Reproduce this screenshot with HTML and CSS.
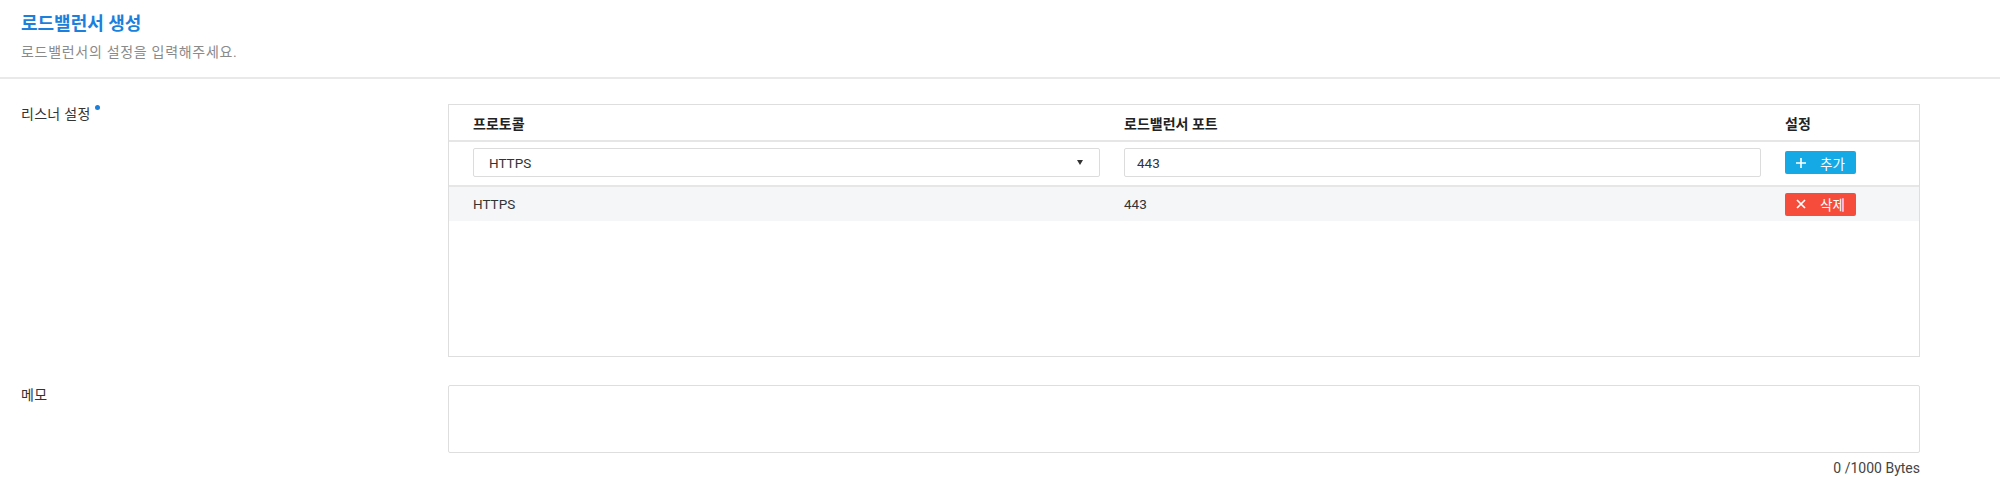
FILE: index.html
```html
<!DOCTYPE html>
<html lang="ko">

<head>
    <meta charset="UTF-8">
    <meta name="viewport" content="width=device-width, initial-scale=1.0">
    <title>로드밸런서 생성</title>
    <link rel="stylesheet" href="styles.css">
</head>

<body>
    <div class="page-head">
        <h1 class="page-title">로드밸런서 생성</h1>
        <p class="page-desc">로드밸런서의 설정을 입력해주세요.</p>
    </div>

    <div class="form">
        <div class="form-row">
            <div class="form-label">리스너 설정<span class="required"></span></div>
            <div class="form-field">
                <div class="listener-box">
                    <div class="lb-row lb-head">
                        <div>프로토콜</div>
                        <div>로드밸런서 포트</div>
                        <div>설정</div>
                    </div>
                    <div class="lb-row lb-input">
                        <div class="select-box">
                            <span>HTTPS</span>
                            <span class="caret"></span>
                        </div>
                        <div class="text-box">443</div>
                        <div>
                            <button class="btn btn-add">
                                <svg width="10" height="10" viewBox="0 0 10 10">
                                    <path d="M5 0V10M0 5H10" stroke="#fff" stroke-width="1.6" />
                                </svg>
                                <span>추가</span>
                            </button>
                        </div>
                    </div>
                    <div class="lb-row lb-item">
                        <div>HTTPS</div>
                        <div>443</div>
                        <div>
                            <button class="btn btn-del">
                                <svg width="10" height="10" viewBox="0 0 10 10">
                                    <path d="M1 1L9 9M9 1L1 9" stroke="#fff" stroke-width="1.7" />
                                </svg>
                                <span>삭제</span>
                            </button>
                        </div>
                    </div>
                </div>
            </div>
        </div>

        <div class="form-row memo-row">
            <div class="form-label">메모</div>
            <div class="form-field">
                <div class="memo-box"></div>
                <div class="memo-count">0 /1000 Bytes</div>
            </div>
        </div>
    </div>
</body>

</html>
```

FILE: styles.css
```css
body {
    margin: 0;
    background: #fff;
    font-family: Roboto, "Noto Sans CJK KR", sans-serif;
    font-size: 14px;
    color: #333;
}

.page-head {
    padding: 12px 21px 15px;
    border-bottom: 2px solid #e9e9e9;
}

.page-title {
    margin: 0;
    font-size: 18px;
    line-height: 24px;
    font-weight: 600;
    color: #1c7fdc;
}

.page-desc {
    margin: 6px 0 0;
    font-size: 14px;
    line-height: 20px;
    letter-spacing: 0.7px;
    color: #8a8a8a;
}

.form {
    padding: 0 80px 0 21px;
}

.form-row {
    display: flex;
    margin-top: 25px;
}

.memo-row {
    margin-top: 28px;
}

.form-label {
    width: 427px;
    flex: none;
    line-height: 20px;
    font-size: 14px;
    letter-spacing: 0.3px;
    color: #333;
}

.required {
    display: inline-block;
    width: 5px;
    height: 5px;
    margin-left: 4px;
    border-radius: 50%;
    background: #1c7fdc;
    vertical-align: 9px;
}

.form-field {
    flex: 1;
}

.listener-box {
    height: 251px;
    border: 1px solid #dedede;
}

.lb-row {
    display: grid;
    grid-template-columns: 627px 637px 1fr;
    column-gap: 24px;
    align-items: center;
    padding: 0 24px;
}

.lb-head {
    height: 35px;
    border-bottom: 2px solid #e6e6e6;
    font-weight: bold;
    font-size: 14px;
    color: #222;
}

.lb-input {
    height: 43px;
    border-bottom: 2px solid #e6e6e6;
}

.lb-item {
    height: 34px;
    background: #f5f6f8;
    font-size: 13.5px;
}

.select-box,
.text-box {
    box-sizing: border-box;
    height: 29px;
    margin-top: -2px;
    border: 1px solid #dcdcdc;
    border-radius: 2px;
    display: flex;
    align-items: center;
    font-size: 13.5px;
    color: #333;
}

.select-box {
    justify-content: space-between;
    padding: 0 16px 0 15px;
}

.text-box {
    padding: 0 12px;
}

.caret {
    width: 0;
    height: 0;
    border-left: 3.5px solid transparent;
    border-right: 3.5px solid transparent;
    border-top: 5px solid #333;
}

.btn {
    display: flex;
    align-items: center;
    gap: 14px;
    width: 71px;
    height: 23px;
    padding: 0 0 0 11px;
    border: 0;
    border-radius: 2px;
    font-family: "Noto Sans CJK KR", sans-serif;
    font-size: 13.5px;
    color: #fff;
}

.btn-add {
    background: #15a9e6;
    margin-top: -2px;
}

.btn-del {
    background: #f64c3b;
}

.memo-box {
    height: 66px;
    border: 1px solid #dedede;
    border-radius: 2px;
}

.memo-count {
    margin-top: 6px;
    text-align: right;
    font-size: 14px;
    line-height: 18px;
    color: #444;
}
```
